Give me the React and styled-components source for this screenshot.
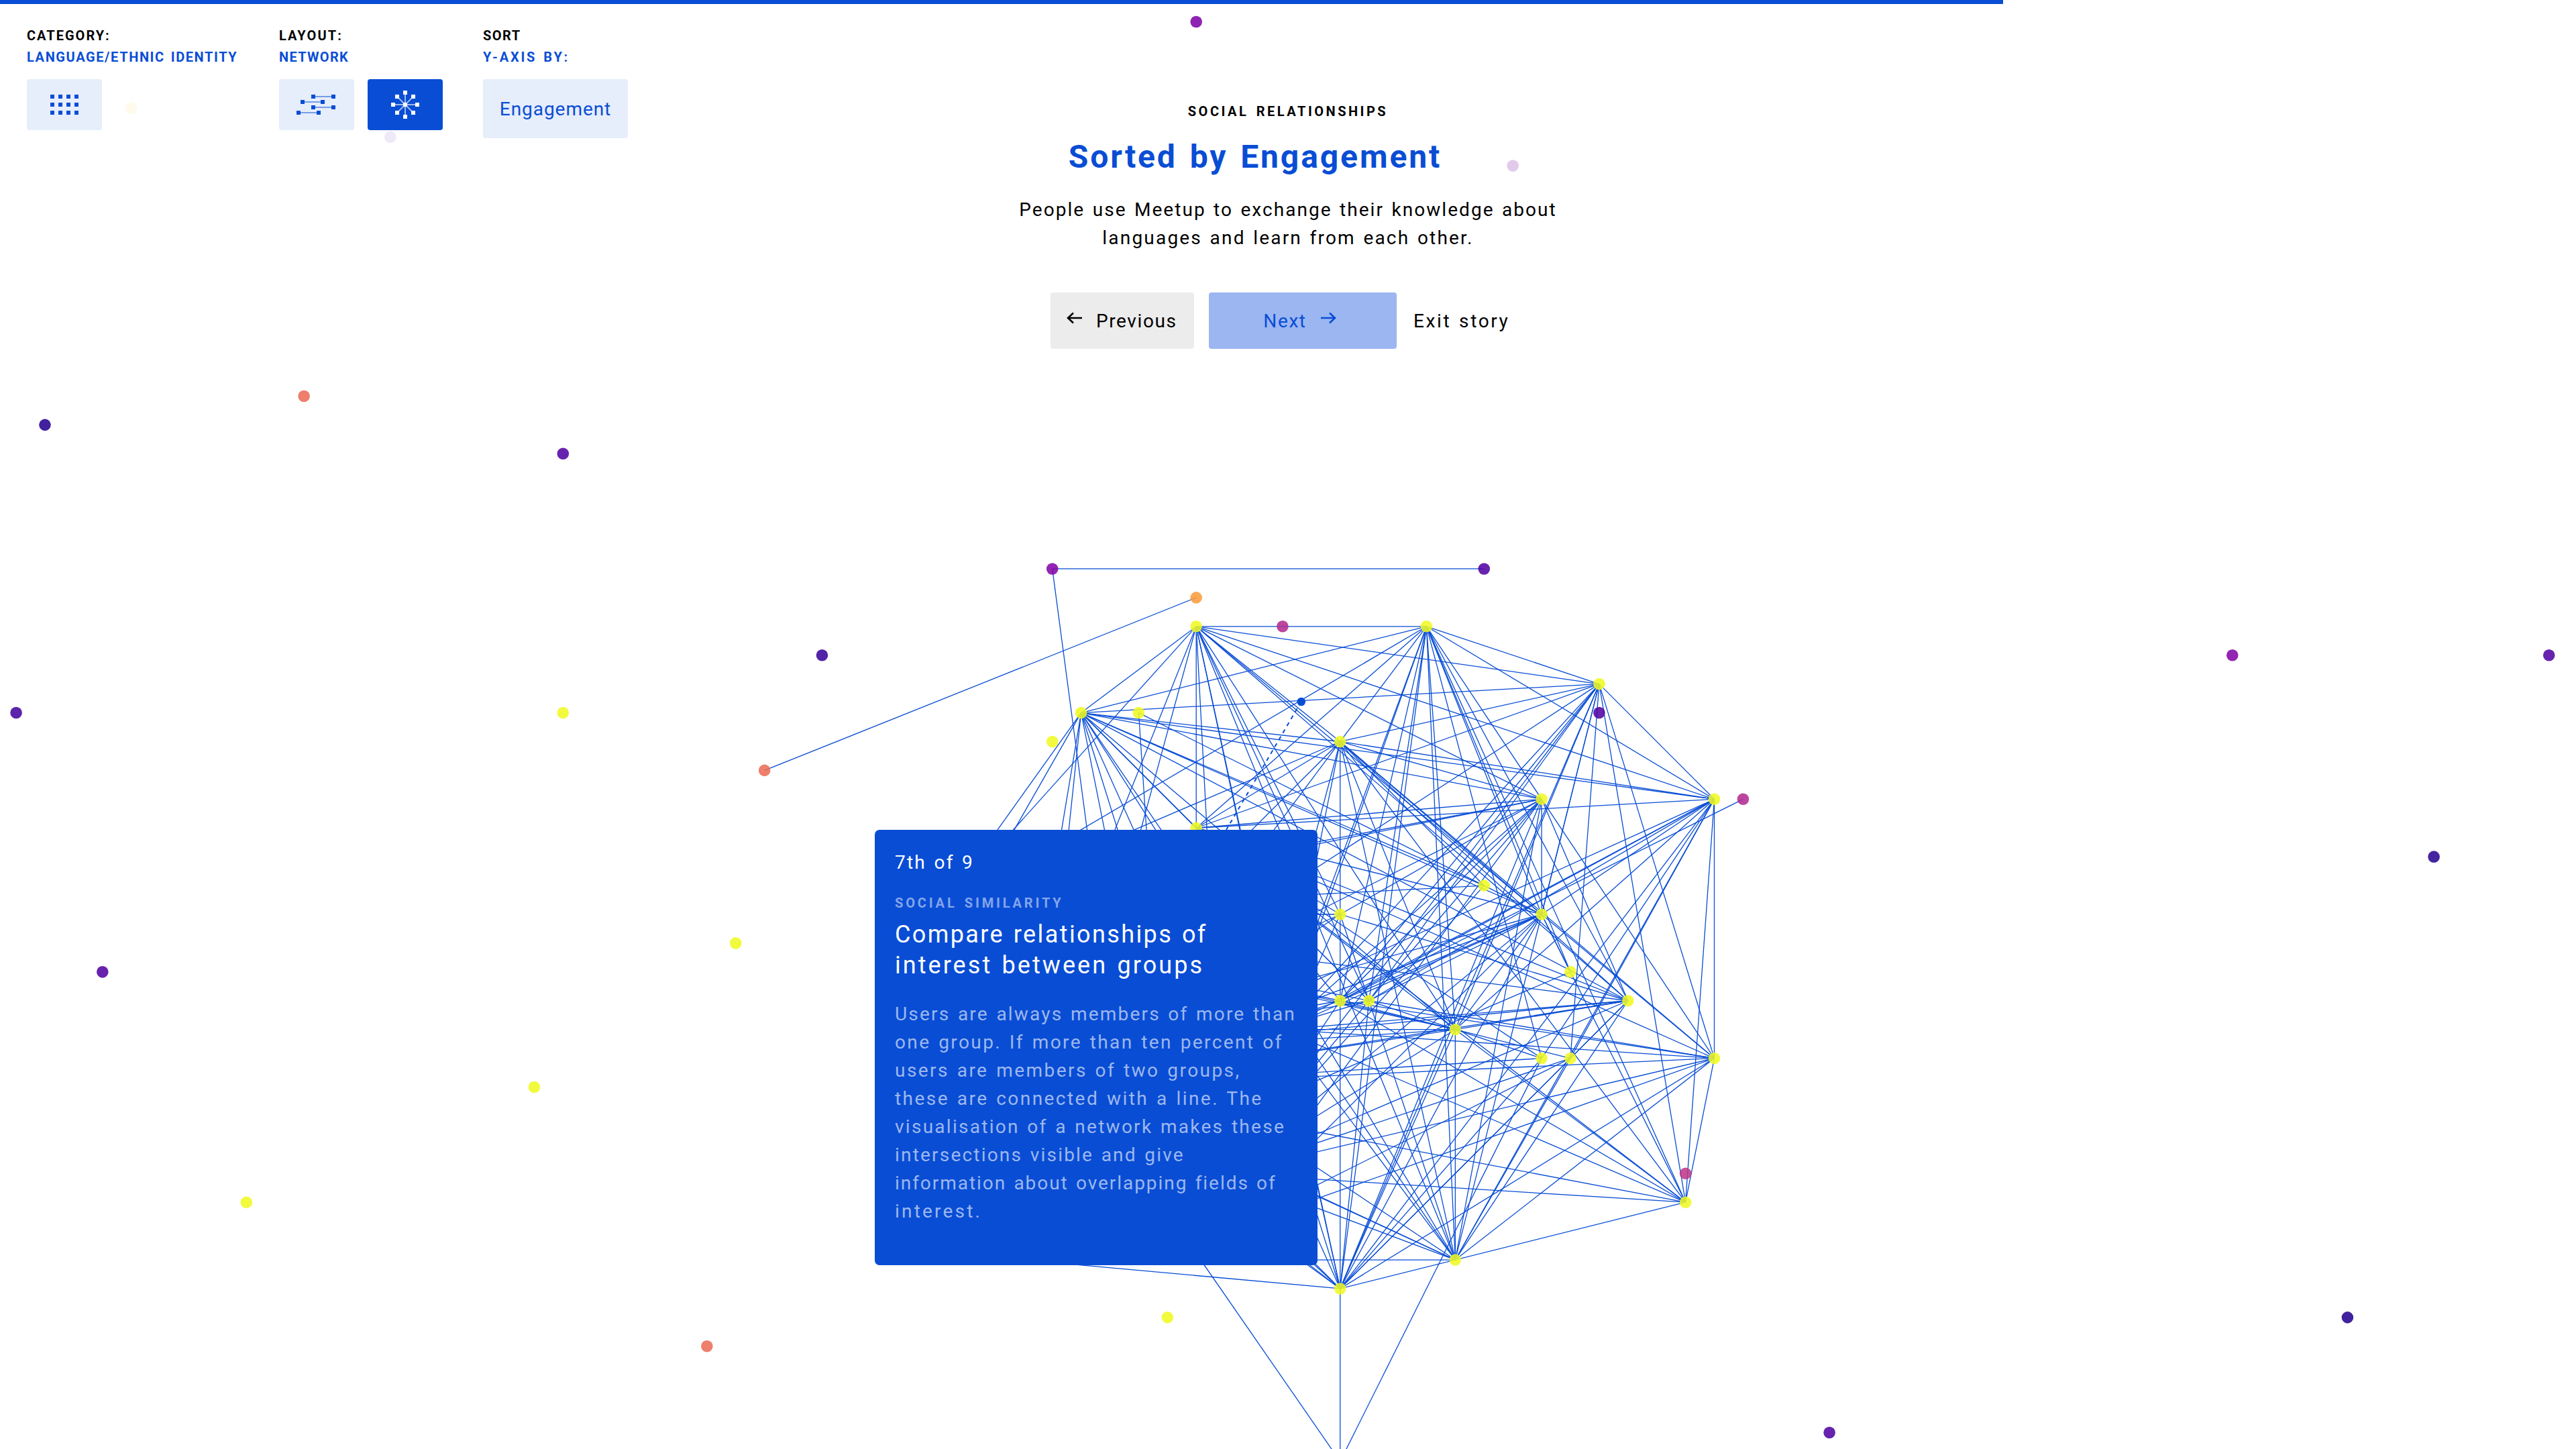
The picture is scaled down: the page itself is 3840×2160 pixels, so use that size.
import React from "react";
import styled, { createGlobalStyle } from "styled-components";

const BLUE = "#094dd5";

const GlobalStyle = createGlobalStyle`
  * { box-sizing: border-box; }
  html, body { margin: 0; padding: 0; background: #fff; overflow: hidden; }
`;

const Page = styled.main`
  position: relative;
  width: 3840px;
  height: 2160px;
  overflow: hidden;
  background: #fff;
  color: #000;
  font-family: Roboto, "Noto Sans", sans-serif;
  font-size: 28px;
  line-height: 42px;
  letter-spacing: 2.05px;
  word-spacing: 2.4px;
`;

const Progress = styled.div`
  width: 2986px;
  height: 6px;
  background: ${BLUE};
`;

const Canvas = styled.svg`
  position: absolute;
  left: 0;
  top: 0;
  display: block;
`;

const Header = styled.header`
  position: relative;
  display: grid;
  grid-template-columns: 376px 304px 216px;
  padding: 31px 40px 0;
  height: 145px;
  align-items: start;
`;

const Control = styled.section`
  display: flex;
  flex-direction: column;
`;

const ControlLabel = styled.div`
  font-size: 20px;
  font-weight: 700;
  line-height: 32px;
  letter-spacing: ${(p) => p.$track || 1.7}px;
  text-transform: uppercase;
  white-space: nowrap;
  color: ${(p) => (p.$accent ? BLUE : "#000")};
`;

const ButtonRow = styled.div`
  display: flex;
  gap: 20px;
  margin-top: 17px;
`;

const IconButton = styled.button`
  display: flex;
  align-items: center;
  justify-content: center;
  width: 112px;
  height: 76px;
  padding: 0;
  border: 0;
  border-radius: 4px;
  background: ${(p) => (p.$active ? BLUE : "#e6edfb")};
`;

const SortButton = styled.button`
  width: 216px;
  height: 88px;
  padding: 2px 0 0;
  border: 0;
  border-radius: 4px;
  background: #e6edfb;
  color: ${BLUE};
  font: inherit;
  letter-spacing: 0.95px;
`;

const Story = styled.section`
  position: relative;
  display: flex;
  flex-direction: column;
  align-items: center;
  text-align: center;
`;

const Overline = styled.div`
  font-size: 20px;
  font-weight: 700;
  line-height: 30px;
  letter-spacing: 3.5px;
  word-spacing: 3px;
`;

const Title = styled.h1`
  margin: 23px 0 0;
  padding-right: 98px;
  color: ${BLUE};
  font-size: 48px;
  font-weight: 700;
  line-height: 60px;
  letter-spacing: 2.9px;
  word-spacing: 4px;
`;

const Lead = styled.p`
  width: 840px;
  margin: 28px 0 0;
`;

const StoryNav = styled.nav`
  display: flex;
  gap: 22px;
  margin-top: 60px;
`;

const NavButton = styled.button`
  display: flex;
  align-items: center;
  justify-content: ${(p) => p.$justify || "center"};
  gap: 20px;
  width: ${(p) => p.$width}px;
  height: 84px;
  padding: 1px ${(p) => p.$padRight || 0}px 0 ${(p) => p.$padLeft || 0}px;
  border: 0;
  border-radius: 4px;
  background: ${(p) => p.$bg || "transparent"};
  color: ${(p) => p.$color || "#000"};
  font: inherit;
  letter-spacing: ${(p) => p.$track || 1.6}px;
  word-spacing: inherit;
  white-space: nowrap;
  svg { margin-bottom: 9px; }
`;

const Card = styled.aside`
  position: absolute;
  left: 1304px;
  top: 1237px;
  width: 660px;
  height: 649px;
  padding: 28px 20px 0 30px;
  border-radius: 7px;
  background: ${BLUE};
  color: #fff;
  letter-spacing: 2.2px;
`;

const Step = styled.div``;

const CardLabel = styled.div`
  margin-top: 24px;
  color: #84a6ea;
  font-size: 20px;
  font-weight: 700;
  line-height: 30px;
  letter-spacing: 3.85px;
`;

const CardTitle = styled.h2`
  margin: 9px 0 0;
  font-size: 36px;
  font-weight: 400;
  line-height: 46px;
  letter-spacing: 2.4px;
`;

const CardText = styled.p`
  margin: 29px 0 0;
  color: #9db8ee;
`;

const Line = styled.span`
  display: block;
  white-space: nowrap;
  letter-spacing: ${(p) => (p.$track ? `${p.$track}px` : "inherit")};
`;

/* Lattice of the network: column 0 / row 0 is the top left hub. */
const px = (c) => 1783.2 + c * 42.905;
const py = (r) => 933.8 + r * 42.92;

const hubs = {
  A: [0, 0], B: [8, 0], C: [-4, 3], X: [-2, 3], D: [5, 4], E: [0, 7], F: [14, 2],
  G: [18, 6], H: [12, 6], I: [10, 9], J: [12, 10], K: [5, 10], L: [13, 12],
  M: [15, 13], N: [5, 13], O: [6, 13], P: [9, 14], Q: [12, 15], R: [13, 15],
  S: [18, 15], T: [17, 20], U: [9, 22], V: [5, 23], W: [5, 29],
  a: [-9, 10], b: [-8, 10], c: [-6, 15], d: [-4, 16], e: [3, 14], f: [1, 19],
  g: [-6, 22], h: [-1, 18], i: [1, 21], p: [-3, 13],
  q: [-5, -2], r: [10, -2], s: [0, -1], t: [-15, 5], u: [19, 6],
};

/* Each hub is followed by the hubs it is linked to. */
const links = {
  A: "BCEFGHDSMPKOUVefgca",
  B: "CFaEDefNOVPUQJTMSGL",
  C: "FDGHIJMPUVEOefhbacg",
  X: "Ih",
  D: "FGHJMSTPUVEacdefI",
  E: "FHGJMSKPONTQUV",
  F: "GJUVPfOcRTSNe",
  G: "STRQUVPJOeNd",
  H: "abcKeOMUVJNi",
  I: "afJ",
  J: "LTPVfiONedc",
  K: "aMOcfd",
  L: "h",
  M: "ecPUVfad",
  N: "STacdfP",
  O: "SadfUVcP",
  P: "TdefabVURQc",
  Q: "dWV",
  R: "fiVMU",
  S: "defiTUV",
  T: "Vedf",
  U: "gcdaef",
  V: "Wgcdaef",
  W: "d",
  q: "rp",
  s: "t",
  u: "N",
};

const hidden = "Wabcdefghip";

const YELLOW = "#f0f921";
const ORANGE = "#ea6c55";
const special = { q: "#8405a7", r: "#5002a2", s: "#fa9b3c", t: ORANGE, u: "#b12a90" };

const dots = [
  [0, -21, "#7d03a8"], [-31, -8, ORANGE], [-40, -7, "#250090"], [-22, -6, "#5002a2"],
  [-13, 1, "#38049a"], [-41, 3, "#43039e"], [-22, 3, YELLOW], [-38, 12, "#5002a2"],
  [-16, 11, YELLOW], [-23, 16, YELLOW], [-33, 20, YELLOW], [-17, 25, ORANGE],
  [-1, 24, YELLOW], [-5, 4, YELLOW], [3, 0, "#b12a90"], [14, 3, "#5002a2"], [36, 1, "#8405a7"],
  [47, 1, "#5002a2"], [43, 8, "#2a0593"], [40, 24, "#250090"], [22, 28, "#5002a2"],
  [17, 19, "#bd3786"],
];

const faded = [[-37, -18, "#fffaeb"], [-28, -17, "#efe8f6"], [11, -16, "#e2caeb"]];

function Network() {
  const edges = Object.entries(links).flatMap(([from, tos]) => tos.split("").map((to) => [from, to]));
  return (
    <Canvas width="3840" height="2160" viewBox="0 0 3840 2160">
      <g stroke={BLUE} strokeWidth="1.3">
        {edges.map(([m, n]) => (
          <line key={m + n} x1={px(hubs[m][0])} y1={py(hubs[m][1])} x2={px(hubs[n][0])} y2={py(hubs[n][1])} />
        ))}
      </g>
      <line x1="1939.6" y1="1046" x2="1828" y2="1237" stroke={BLUE} strokeWidth="2" strokeDasharray="6 6" />
      <circle cx="1939.8" cy="1046" r="6.3" fill={BLUE} />
      <g fillOpacity="0.87">
        {Object.entries(hubs).filter(([k]) => !hidden.includes(k)).map(([k, [c, r]]) => (
          <circle key={k} cx={px(c)} cy={py(r)} r="8.8" fill={special[k] || YELLOW} />
        ))}
        {dots.map(([c, r, fill]) => (
          <circle key={c + "," + r} cx={px(c)} cy={py(r)} r="8.8" fill={fill} />
        ))}
      </g>
      {faded.map(([c, r, fill]) => (
        <circle key={c + "," + r} cx={px(c)} cy={py(r)} r="8.8" fill={fill} />
      ))}
    </Canvas>
  );
}

const GridIcon = () => (
  <svg width="42" height="30" fill={BLUE}>
    {[0, 12, 24].map((y) => [0, 12, 24, 36].map((x) => <rect key={x + "-" + y} x={x} y={y} width="6" height="6" />))}
  </svg>
);

const RangeIcon = () => (
  <svg width="60" height="30" fill={BLUE}>
    {[[22, 0], [6, 8], [22, 16], [0, 24]].map(([x, y]) => (
      <g key={y}>
        <rect x={x + 6} y={y + 2} width="20" height="2" opacity="0.5" />
        <rect x={x} y={y} width="6" height="6" />
        <rect x={x + 30} y={y} width="6" height="6" />
        <rect x={x + 26} y={y + 2} width="4" height="2" opacity="0.5" />
      </g>
    ))}
  </svg>
);

const NetworkIcon = () => (
  <svg width="42" height="42" fill="#fff">
    <path d="M21 3V39M3 21H39M9 9L33 33M33 9L9 33" stroke="#fff" strokeWidth="2" opacity="0.6" />
    {[[21, 21], [21, 3], [21, 39], [3, 21], [39, 21], [9, 9], [33, 33], [33, 9], [9, 33]].map(([x, y]) => (
      <rect key={x + "-" + y} x={x - 3} y={y - 3} width="6" height="6" />
    ))}
  </svg>
);

const Arrow = ({ flip }) => (
  <svg width="24" height="18" fill="none" stroke="currentColor" strokeWidth="2.6" transform={flip ? "scale(-1 1)" : undefined}>
    <path d="M1 9H22M14 1.5L22 9L14 16.5" />
  </svg>
);

export default function App() {
  return (
    <Page>
      <GlobalStyle />
      <Network />
      <Progress />
      <Header>
        <Control>
          <ControlLabel $track={2}>Category:</ControlLabel>
          <ControlLabel $accent $track={1.6}>Language/Ethnic Identity</ControlLabel>
          <ButtonRow>
            <IconButton><GridIcon /></IconButton>
          </ButtonRow>
        </Control>
        <Control>
          <ControlLabel $track={2.1}>Layout:</ControlLabel>
          <ControlLabel $accent $track={1.3}>Network</ControlLabel>
          <ButtonRow>
            <IconButton><RangeIcon /></IconButton>
            <IconButton $active><NetworkIcon /></IconButton>
          </ButtonRow>
        </Control>
        <Control>
          <ControlLabel $track={1.5}>Sort</ControlLabel>
          <ControlLabel $accent $track={2.8}>Y-axis by:</ControlLabel>
          <ButtonRow>
            <SortButton>Engagement</SortButton>
          </ButtonRow>
        </Control>
      </Header>
      <Story>
        <Overline>SOCIAL RELATIONSHIPS</Overline>
        <Title>Sorted by Engagement</Title>
        <Lead>
          <Line>People use Meetup to exchange their knowledge about</Line>
          <Line $track={2.2}>languages and learn from each other.</Line>
        </Lead>
        <StoryNav>
          <NavButton $width={214} $bg="#ececec" $justify="flex-start" $padLeft={24}>
            <Arrow flip />
            Previous
          </NavButton>
          <NavButton $width={280} $bg="#9bb6f1" $color={BLUE} $padRight={9}>
            Next
            <Arrow />
          </NavButton>
          <NavButton $width={170} $justify="flex-start" $padLeft={3} $track={2.6}>Exit story</NavButton>
        </StoryNav>
      </Story>
      <Card>
        <Step>7th of 9</Step>
        <CardLabel>SOCIAL SIMILARITY</CardLabel>
        <CardTitle>
          <Line>Compare relationships of</Line>
          <Line $track={3.05}>interest between groups</Line>
        </CardTitle>
        <CardText>
          <Line>Users are always members of more than</Line>
          <Line $track={2.4}>one group. If more than ten percent of</Line>
          <Line $track={2.45}>users are members of two groups,</Line>
          <Line $track={2.45}>these are connected with a line. The</Line>
          <Line $track={2.27}>visualisation of a network makes these</Line>
          <Line>intersections visible and give</Line>
          <Line $track={1.95}>information about overlapping fields of</Line>
          <Line $track={3.2}>interest.</Line>
        </CardText>
      </Card>
    </Page>
  );
}
